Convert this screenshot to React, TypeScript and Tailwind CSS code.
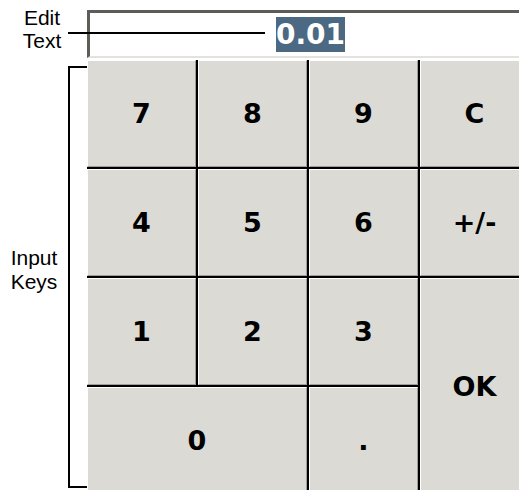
const keyFont = { fontFamily: '"DejaVu Sans", Verdana, sans-serif' };

function Key({ label, className = "" }: { label: string; className?: string }) {
  return (
    <div className={`border-r-2 border-b-2 border-black ${className}`}>
      <div className="h-full flex items-center justify-center bg-[#dcdad5] border border-t-white border-l-white border-r-[#9f9d99] border-b-[#9f9d99]">
        <span className="text-[27px] font-bold text-black leading-none" style={keyFont}>
          {label}
        </span>
      </div>
    </div>
  );
}

export default function App() {
  return (
    <div
      className="relative w-[519px] h-[490px] overflow-hidden bg-white text-black"
      style={{ fontFamily: '"Liberation Sans", Arial, sans-serif' }}
    >
      <div className="flex">
        {/* annotations */}
        <div className="w-[87px] shrink-0 flex flex-col">
          <div className="w-[84px] mt-[6px] text-center text-[21px] leading-[23px]">
            <div>Edit</div>
            <div>Text</div>
          </div>
          <div className="flex items-center mt-[14px]">
            <div className="w-[68px] text-center text-[21px] leading-[24px] mb-[14px]">
              <div>Input</div>
              <div>Keys</div>
            </div>
            <div className="w-[19px] h-[422px] border-l-2 border-y-2 border-black" />
          </div>
        </div>

        {/* keypad widget */}
        <div className="w-[444px] shrink-0 flex flex-col pt-[10px]">
          <div className="h-[48px] flex items-center justify-center bg-white border-t-[3px] border-l-[3px] border-t-[#5e5c59] border-l-[#5e5c59] border-b-2 border-b-[#e4e2de]">
            <span
              className="inline-block bg-[#4b6983] text-white text-[28px] font-bold leading-[35px]"
              style={keyFont}
            >
              0.01
            </span>
          </div>
          <div className="mt-[2px] grid grid-cols-4 grid-rows-[repeat(4,109px)]">
            <Key label="7" />
            <Key label="8" />
            <Key label="9" />
            <Key label="C" />
            <Key label="4" />
            <Key label="5" />
            <Key label="6" />
            <Key label="+/-" />
            <Key label="1" />
            <Key label="2" />
            <Key label="3" />
            <Key label="OK" className="row-span-2" />
            <Key label="0" className="col-span-2" />
            <Key label="." />
          </div>
        </div>
      </div>

      {/* leader line from the label to the edit field */}
      <div className="absolute left-[68px] top-[32px] w-[197px] h-[2px] bg-black" />
    </div>
  );
}
